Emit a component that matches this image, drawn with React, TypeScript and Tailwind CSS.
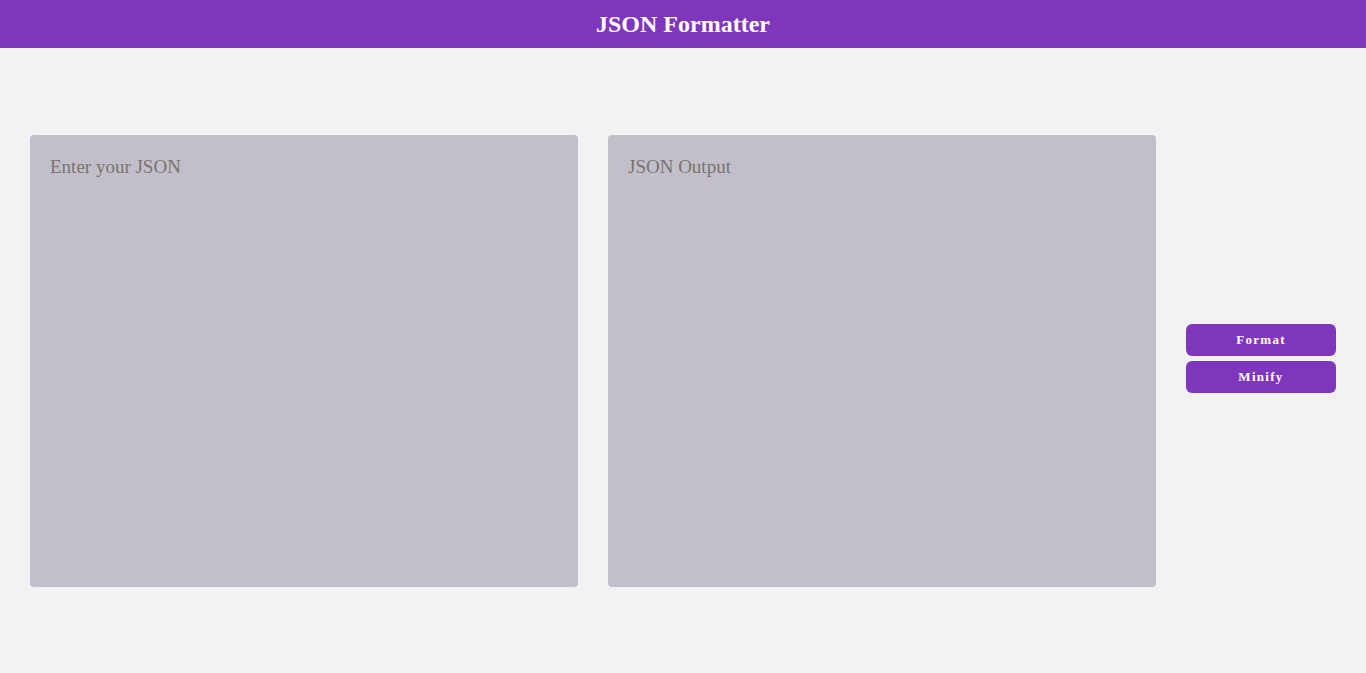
export default function App() {
  return (
    <div className="min-h-screen bg-[#f2f2f2] font-['Liberation_Serif',serif]">
      <header className="flex h-12 items-center justify-center bg-[#7e36bd]">
        <h1 className="text-2xl font-bold text-white">JSON Formatter</h1>
      </header>
      <main className="flex h-[625px] items-center gap-[30px] px-[30px]">
        <textarea
          className="h-[452px] w-[548px] resize-none rounded bg-[#c3bfca] px-5 pt-[18px] pb-5 text-[19px] text-[#333] outline-none placeholder:text-[#77736f]"
          placeholder="Enter your JSON"
        />
        <textarea
          className="h-[452px] w-[548px] resize-none rounded bg-[#c3bfca] px-5 pt-[18px] pb-5 text-[19px] text-[#333] outline-none placeholder:text-[#77736f]"
          placeholder="JSON Output"
          readOnly
        />
        <div className="mb-[5px] flex w-[150px] flex-col gap-[5px]">
          <button className="h-8 rounded-md bg-[#7e36bd] text-[13px] font-bold tracking-widest text-white">
            Format
          </button>
          <button className="h-8 rounded-md bg-[#7e36bd] text-[13px] font-bold tracking-widest text-white">
            Minify
          </button>
        </div>
      </main>
    </div>
  );
}
